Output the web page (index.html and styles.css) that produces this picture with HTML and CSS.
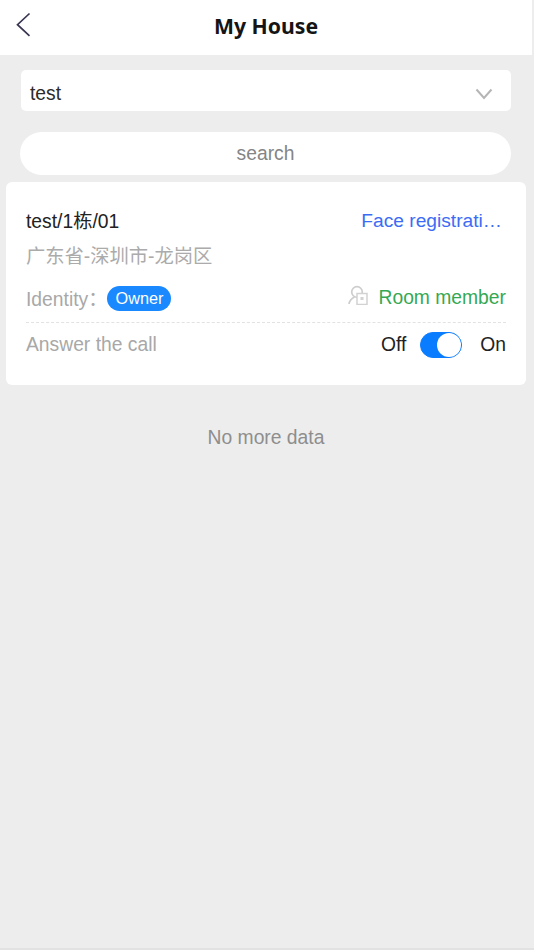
FILE: index.html
```html
<!DOCTYPE html>
<html lang="en">
<head>
<meta charset="utf-8">
<title>My House</title>
<link rel="stylesheet" href="styles.css">
</head>
<body>
<div class="page">
  <header class="header">
    <svg class="back" width="16" height="26" viewBox="0 0 16 26"><path d="M14.500 2.500 L2.500 13.700 L14.500 24.800" fill="none" stroke="#3a3550" stroke-width="1.700"/></svg>
    <h1 class="title">My House</h1>
  </header>
  <div class="select">
    <span>test</span>
    <svg width="18" height="12" viewBox="0 0 18 12"><path d="M1.500 1.500 L9 10 L16.500 1.500" fill="none" stroke="#b5b5b5" stroke-width="2"/></svg>
  </div>
  <div class="search">search</div>
  <section class="card">
    <div class="row row-top">
      <span class="name">test/1栋/01</span>
      <span class="face">Face registrati…</span>
    </div>
    <div class="address">广东省-深圳市-龙岗区</div>
    <div class="row row-identity">
      <div class="identity"><span class="muted">Identity：</span><span class="badge">Owner</span></div>
      <div class="member">
        <svg width="20" height="20" viewBox="0 0 20 20"><g fill="none" stroke="#cdcdcd" stroke-width="1.700"><circle cx="9" cy="7" r="5.300"/><path d="M1 19 C1.500 15.500 3.500 13.500 6.500 12"/></g><rect x="9" y="8.500" width="10" height="11" fill="#fff" stroke="#d2d2d2" stroke-width="1.500"/><rect x="12.500" y="12" width="3" height="3" fill="#d2d2d2"/></svg>
        <span>Room member</span>
      </div>
    </div>
    <div class="row row-call">
      <span class="muted">Answer the call</span>
      <div class="switch-group">
        <span>Off</span>
        <span class="switch"><span class="knob"></span></span>
        <span>On</span>
      </div>
    </div>
  </section>
  <p class="end">No more data</p>
</div>
</body>
</html>
```
FILE: styles.css
```css
* { box-sizing: border-box; }
html, body { margin: 0; height: 100%; }
body { font-family: "Liberation Sans", "Noto Sans CJK SC", sans-serif; background: #fff; font-size: 19.300px; }
.page { width: 534px; height: 950px; background: #ededed; overflow: hidden; border-bottom: 2px solid #e2e2e2; }
.header { height: 55px; width: 532px; background: #fff; display: flex; align-items: center; justify-content: center; position: relative; }
.back { position: absolute; left: 15px; top: 11px; }
.title { margin: 0 0 5px 0; font-size: 21.200px; font-weight: 700; color: #141414; font-family: "Noto Sans", "Liberation Sans", sans-serif; }
.select { margin: 15px 0 0 21px; width: 490px; height: 41px; background: #fff; border-radius: 5px; display: flex; align-items: center; justify-content: space-between; padding: 6px 18px 0 9px; color: #2b2b2b; }
.search { margin: 21px 0 0 20px; width: 491px; height: 43px; border-radius: 22px; background: #fff; display: flex; align-items: center; justify-content: center; padding-top: 1px; color: #858585; }
.card { margin: 7px 0 0 6px; width: 520px; height: 203px; background: #fff; border-radius: 6px; padding: 26px 20px 0; }
.row { display: flex; align-items: center; justify-content: space-between; }
.row-top { height: 26px; padding-right: 4px; }
.name { color: #222; margin-bottom: 2px; }
.face { color: #3c6cf5; font-size: 19.200px; }
.address { margin-top: 10px; line-height: 26px; color: #ababab; }
.row-identity { height: 48px; margin-top: 5px; border-bottom: 1px dashed #e2e2e2; padding-bottom: 1px; }
.identity { display: flex; align-items: center; }
.muted { color: #a8a8a8; }
.badge { font-size: 16.300px; color: #fff; background: #1a89ff; border-radius: 13px; height: 25px; width: 64px; display: flex; align-items: center; justify-content: center; margin-left: 0; }
.member { display: flex; align-items: center; gap: 10px; color: #35a853; }
.member svg { margin-bottom: 6px; }
.row-call { height: 43px; }
.switch-group { display: flex; align-items: center; color: #222; }
.switch { width: 42px; height: 26px; border-radius: 13px; background: #0a7cff; border: 1px solid #0a7cff; margin: 0 18px 0 14px; display: flex; justify-content: flex-end; }
.knob { width: 24px; height: 24px; border-radius: 50%; background: #fff; }
.end { width: 532px; margin: 41px 0 0; text-align: center; line-height: 24px; color: #8e8e8e; }
```
